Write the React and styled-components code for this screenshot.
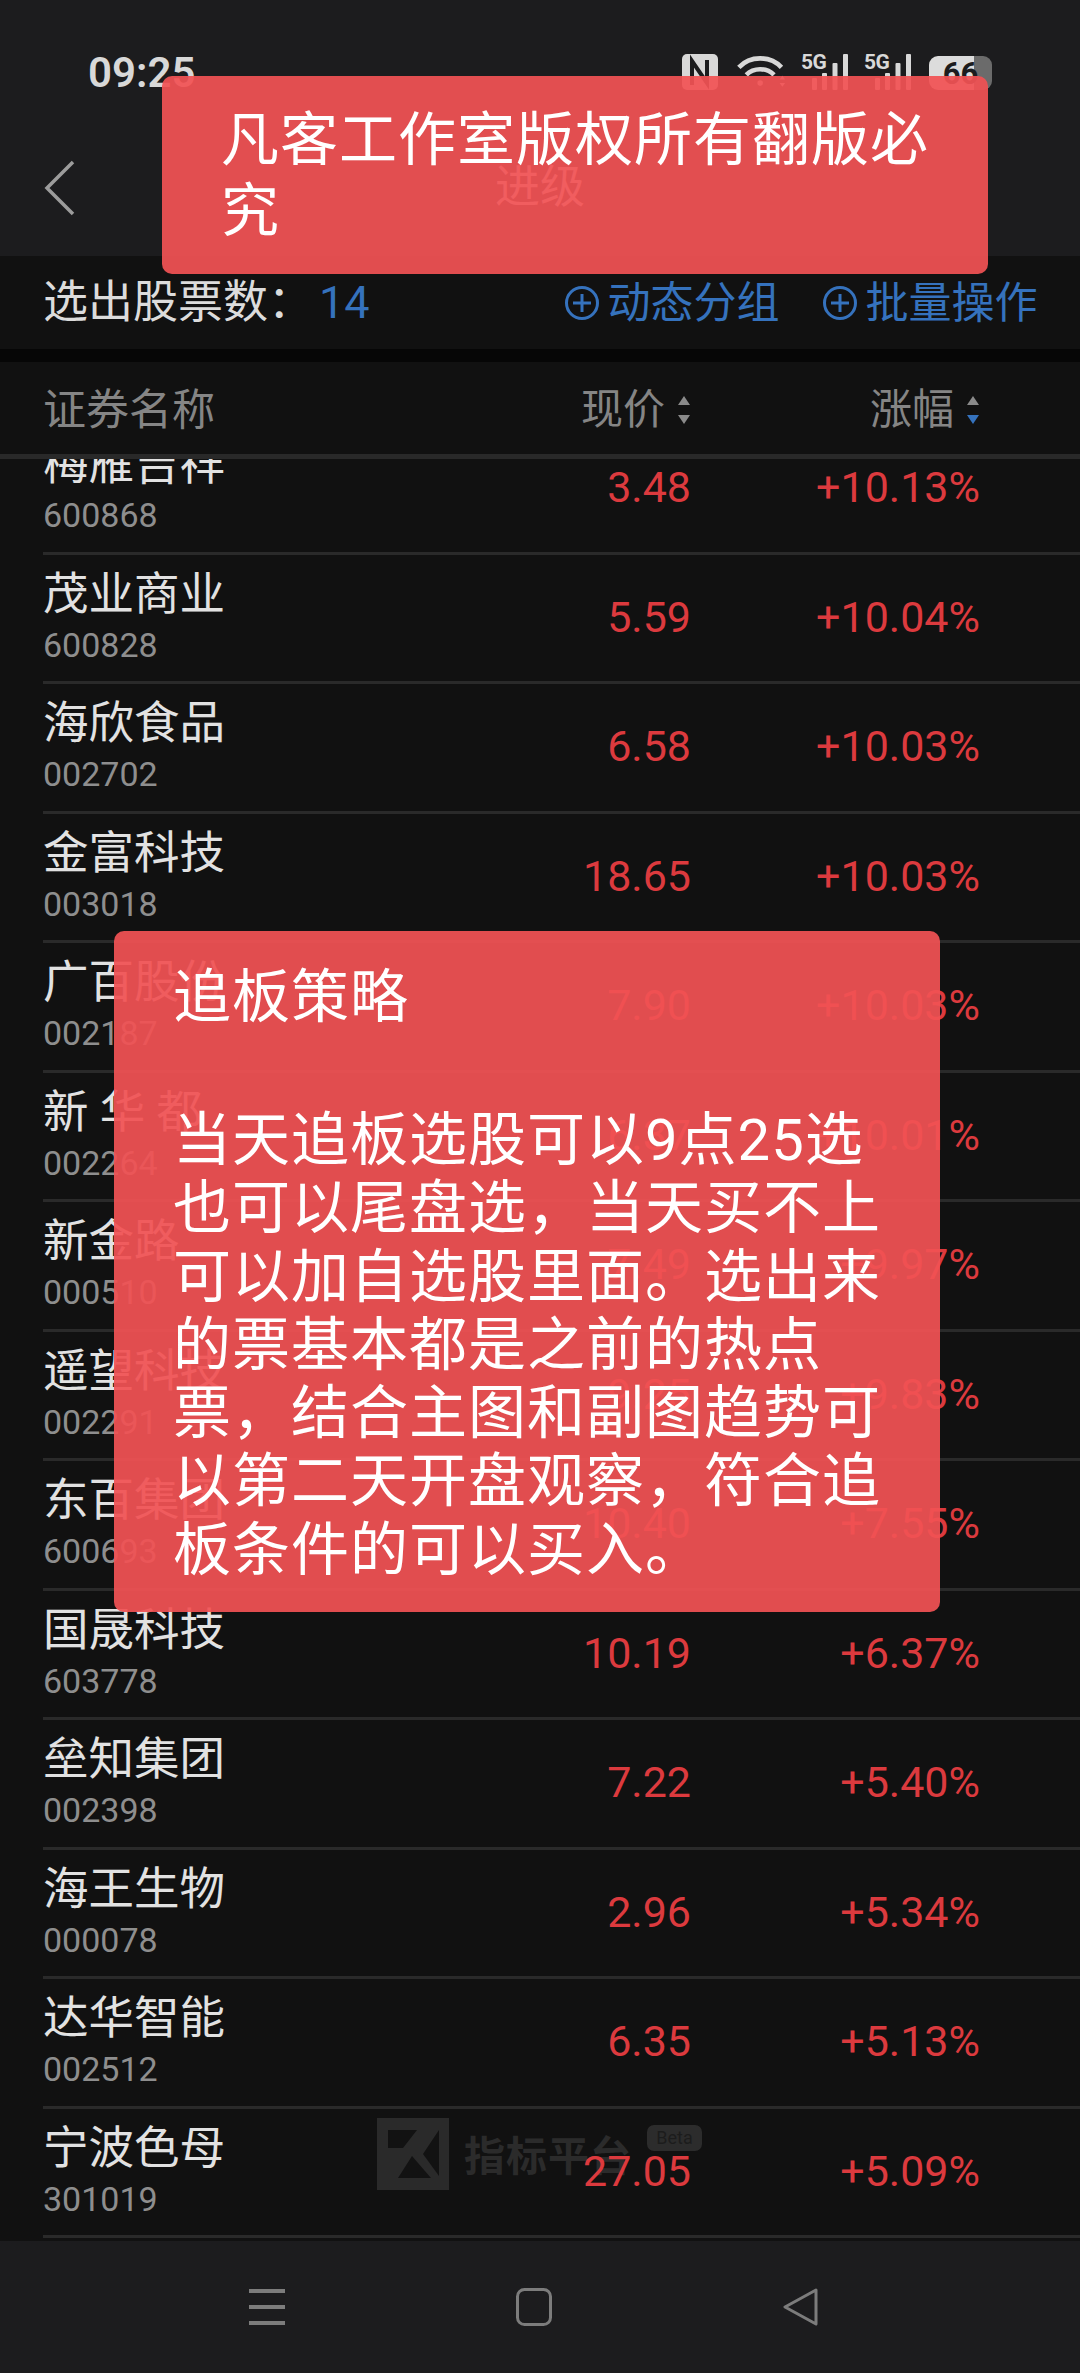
import React from "react";
import styled, { createGlobalStyle } from "styled-components";

const Global = createGlobalStyle`
  html, body { margin: 0; padding: 0; background: #111; }
  * { box-sizing: border-box; }
`;

const FONT = `Roboto, "Noto Sans CJK SC", sans-serif`;
const BLUE = "#3572bd";
const RED = "#dc3a3e";

const Page = styled.div`
  position: relative;
  width: 1080px;
  height: 2373px;
  overflow: hidden;
  display: flex;
  flex-direction: column;
  background: #111;
  font-family: ${FONT};
`;

const Header = styled.header`
  height: 256px;
  flex: none;
  background: #1c1c1e;
  display: flex;
  flex-direction: column;
`;

const StatusBar = styled.div`
  height: 120px;
  padding: 54px 88px 0 88px;
  display: flex;
  justify-content: space-between;
  align-items: flex-start;
`;

const Time = styled.span`
  font-size: 42px;
  line-height: 38px;
  font-weight: 600;
  color: #d8d8d8;
`;

const StatusIcons = styled.div`
  display: flex;
  align-items: flex-start;
`;

const Network = styled.div`
  position: relative;
  width: 47px;
  height: 36px;
  margin-left: ${(p) => p.$gap}px;
`;

const NetLabel = styled.span`
  position: absolute;
  left: 0;
  top: -3px;
  font-size: 21px;
  line-height: 22px;
  font-weight: 700;
  letter-spacing: -0.5px;
  color: #d8d8d8;
`;

const WifiSlot = styled.span`
  display: block;
  margin-left: 19px;
`;

const Battery = styled.div`
  width: 63px;
  height: 34px;
  margin-top: 2px;
  margin-left: 18px;
  border-radius: 9px;
  background: linear-gradient(90deg, #dcdcdc 0 72%, #6b6b6b 72% 100%);
  color: #1c1c1e;
  font-size: 31px;
  line-height: 36px;
  font-weight: 700;
  text-align: center;
`;

const TitleRow = styled.div`
  flex: 1;
  display: grid;
  grid-template-columns: 1fr auto 1fr;
  align-items: center;
  padding: 0 44px;
`;

const Title = styled.span`
  font-size: 45px;
  line-height: 50px;
  color: #e8e8e8;
`;

const Toolbar = styled.div`
  height: 93px;
  flex: none;
  background: #111;
  padding: 0 43px;
  display: flex;
  align-items: center;
`;

const CountLabel = styled.span`
  font-size: 45px;
  line-height: 50px;
  color: #dcdcdc;
  white-space: nowrap;
`;

const CountValue = styled.span`
  font-size: 45px;
  line-height: 50px;
  color: ${BLUE};
  margin-left: 6px;
`;

const Action = styled.span`
  display: flex;
  align-items: center;
  gap: 8px;
  margin-left: ${(p) => p.$offset}px;
  font-size: 43px;
  line-height: 50px;
  color: ${BLUE};
  white-space: nowrap;
`;

const Divider = styled.div`
  height: 13px;
  flex: none;
  background: #060606;
`;

const TableHead = styled.div`
  height: 97px;
  flex: none;
  background: #111;
  border-bottom: 5px solid #292929;
  display: grid;
  grid-template-columns: 1fr 200px 289px;
  align-items: center;
  padding: 4px 100px 0 43px;
`;

const HeadName = styled.span`
  font-size: 43px;
  line-height: 50px;
  color: #858585;
`;

const HeadSort = styled.span`
  display: flex;
  justify-content: flex-end;
  align-items: center;
  gap: 12px;
  font-size: 42px;
  line-height: 50px;
  color: #858585;
`;

const List = styled.main`
  position: relative;
  flex: 1;
  overflow: hidden;
`;

const Row = styled.div`
  height: 129.5px;
  margin-left: 43px;
  padding-right: 100px;
  border-bottom: 3px solid #2a2a2a;
  display: grid;
  grid-template-columns: 1fr 200px 289px;
  align-items: start;
  &:first-child { margin-top: -34px; }
`;

const NameCell = styled.div`
  padding-top: 15px;
  display: flex;
  flex-direction: column;
`;

const StockName = styled.span`
  font-size: 45.5px;
  line-height: 50px;
  color: #e2e2e2;
`;

const StockCode = styled.span`
  margin-top: 5px;
  font-size: 34px;
  line-height: 40px;
  color: #8e8e8e;
`;

const Num = styled.span`
  padding-top: 37px;
  font-size: 43px;
  line-height: 50px;
  text-align: right;
  color: ${RED};
`;

const NavBar = styled.nav`
  height: 132px;
  flex: none;
  margin-top: 2px;
  background: #1c1c1e;
  display: flex;
  justify-content: center;
  align-items: center;
  padding-right: 13px;
`;

const NavCell = styled.span`
  width: 267px;
  display: flex;
  justify-content: center;
`;

const Watermark = styled.div`
  position: absolute;
  left: 377px;
  top: 2118px;
  display: flex;
  align-items: center;
  gap: 15px;
`;

const WatermarkText = styled.span`
  font-size: 41px;
  font-weight: 700;
  line-height: 50px;
  letter-spacing: 1px;
  color: #2b2b2b;
  margin-top: 5px;
`;

const BetaBadge = styled.span`
  position: absolute;
  left: 270px;
  top: 7px;
  width: 55px;
  height: 26px;
  border-radius: 7px;
  background: #2c2c2c;
  color: #1c1c1c;
  font-size: 18px;
  line-height: 26px;
  text-align: center;
`;

const Banner = styled.section`
  position: absolute;
  z-index: 5;
  left: ${(p) => p.$left}px;
  top: ${(p) => p.$top}px;
  width: 826px;
  padding: ${(p) => p.$pad};
  border-radius: 10px;
  background: rgba(241, 82, 84, 0.93);
  color: #fff;
  font-size: 58px;
  letter-spacing: 1px;
`;

const Line = styled.span`
  display: block;
  white-space: nowrap;
  line-height: ${(p) => p.$height}px;
  margin-bottom: ${(p) => p.$gap || 0}px;
`;

const Sort = ({ downBlue }) => (
  <svg width="14" height="30" viewBox="0 0 14 30">
    <path d="M7 1 L13 10 H1 Z" fill="#8a8a8a" />
    <path d="M7 29 L13 20 H1 Z" fill={downBlue ? BLUE : "#8a8a8a"} />
  </svg>
);

const PlusCircle = () => (
  <svg width="36" height="36" viewBox="0 0 36 36" fill="none" stroke={BLUE} strokeWidth="3">
    <circle cx="18" cy="18" r="15.5" />
    <path d="M18 9v18M9 18h18" />
  </svg>
);

const Bars = () => (
  <svg width="47" height="36" viewBox="0 0 47 36" style={{ display: "block" }} fill="#d8d8d8">
    <rect x="11" y="24" width="5" height="12" rx="1" />
    <rect x="21" y="19" width="5" height="17" rx="1" />
    <rect x="31.5" y="9" width="5" height="27" rx="1" />
    <rect x="42" y="0" width="5" height="36" rx="1" />
  </svg>
);

const rows = [
  ["梅雁吉祥", "600868", "3.48", "+10.13%"],
  ["茂业商业", "600828", "5.59", "+10.04%"],
  ["海欣食品", "002702", "6.58", "+10.03%"],
  ["金富科技", "003018", "18.65", "+10.03%"],
  ["广百股份", "002187", "7.90", "+10.03%"],
  ["新 华 都", "002264", "6.37", "+10.01%"],
  ["新金路", "000510", "7.49", "+9.97%"],
  ["遥望科技", "002291", "9.25", "+9.83%"],
  ["东百集团", "600693", "10.40", "+7.55%"],
  ["国晟科技", "603778", "10.19", "+6.37%"],
  ["垒知集团", "002398", "7.22", "+5.40%"],
  ["海王生物", "000078", "2.96", "+5.34%"],
  ["达华智能", "002512", "6.35", "+5.13%"],
  ["宁波色母", "301019", "27.05", "+5.09%"],
];

export default function App() {
  return (
    <Page>
      <Global />
      <Header>
        <StatusBar>
          <Time>09:25</Time>
          <StatusIcons>
            <svg width="36" height="36" viewBox="0 0 36 36">
              <rect width="36" height="36" rx="5" fill="#d8d8d8" />
              <path d="M10 31V7l15 22V6" fill="none" stroke="#1c1c1e" strokeWidth="4" />
            </svg>
            <WifiSlot>
              <svg width="50" height="36" viewBox="0 0 54 36" fill="none" stroke="#d8d8d8" strokeWidth="5">
                <path d="M2 13C14 0 36 0 48 13" />
                <path d="M10 21c8-8 22-8 30 0" />
                <circle cx="25" cy="30" r="3" fill="#d8d8d8" stroke="none" />
                <path d="M46 26l3-4 3 4ZM46 30l3 4 3-4Z" fill="#d8d8d8" stroke="none" />
              </svg>
            </WifiSlot>
            <Network $gap={14}>
              <NetLabel>5G</NetLabel>
              <Bars />
            </Network>
            <Network $gap={16}>
              <NetLabel>5G</NetLabel>
              <Bars />
            </Network>
            <Battery>66</Battery>
          </StatusIcons>
        </StatusBar>
        <TitleRow>
          <svg width="32" height="56" viewBox="0 0 32 56" fill="none" stroke="#9c9c9c" strokeWidth="3.5">
            <path d="M29 2 L3 28 L29 54" />
          </svg>
          <Title>进级</Title>
          <span />
        </TitleRow>
      </Header>

      <Toolbar>
        <CountLabel>选出股票数：</CountLabel>
        <CountValue>14</CountValue>
        <Action $offset={194}>
          <PlusCircle />
          动态分组
        </Action>
        <Action $offset={42}>
          <PlusCircle />
          批量操作
        </Action>
      </Toolbar>
      <Divider />
      <TableHead>
        <HeadName>证券名称</HeadName>
        <HeadSort>
          现价
          <Sort />
        </HeadSort>
        <HeadSort>
          涨幅
          <Sort downBlue />
        </HeadSort>
      </TableHead>

      <Watermark>
        <svg width="72" height="72" viewBox="0 0 72 72">
          <rect width="72" height="72" fill="#2a2a2a" />
          <path d="M11 12H40L26 30H11Z" fill="#121212" />
          <path d="M62 12V58L46 36Z" fill="#121212" />
          <path d="M21 60L35 38L54 60Z" fill="#121212" />
        </svg>
        <WatermarkText>指标平台</WatermarkText>
        <BetaBadge>Beta</BetaBadge>
      </Watermark>

      <List>
        {rows.map(([name, code, price, pct]) => (
          <Row key={code}>
            <NameCell>
              <StockName>{name}</StockName>
              <StockCode>{code}</StockCode>
            </NameCell>
            <Num>{price}</Num>
            <Num>{pct}</Num>
          </Row>
        ))}
      </List>

      <NavBar>
        <NavCell>
          <svg width="36" height="36" viewBox="0 0 36 36" fill="#7c7c7c">
            <rect width="36" height="4" y="0" />
            <rect width="36" height="4" y="16" />
            <rect width="36" height="4" y="32" />
          </svg>
        </NavCell>
        <NavCell>
          <svg width="36" height="38" viewBox="0 0 36 38" fill="none" stroke="#7c7c7c" strokeWidth="3">
            <rect x="1.5" y="1.5" width="33" height="35" rx="7" />
          </svg>
        </NavCell>
        <NavCell>
          <svg width="36" height="38" viewBox="0 0 36 38" fill="none" stroke="#7c7c7c" strokeWidth="3" strokeLinejoin="round">
            <path d="M33 2 L2 19 L33 36 Z" />
          </svg>
        </NavCell>
      </NavBar>

      <Banner $left={162} $top={76} $pad="29px 59px 27px">
        <Line $height={71}>凡客工作室版权所有翻版必</Line>
        <Line $height={71}>究</Line>
      </Banner>

      <Banner $left={114} $top={931} $pad="32px 58px 28px 59px">
        <Line $height={68} $gap={75}>追板策略</Line>
        <Line $height={68.3}>当天追板选股可以9点25选</Line>
        <Line $height={68.3}>也可以尾盘选，当天买不上</Line>
        <Line $height={68.3}>可以加自选股里面。选出来</Line>
        <Line $height={68.3}>的票基本都是之前的热点</Line>
        <Line $height={68.3}>票，结合主图和副图趋势可</Line>
        <Line $height={68.3}>以第二天开盘观察，符合追</Line>
        <Line $height={68.3}>板条件的可以买入。</Line>
      </Banner>
    </Page>
  );
}
